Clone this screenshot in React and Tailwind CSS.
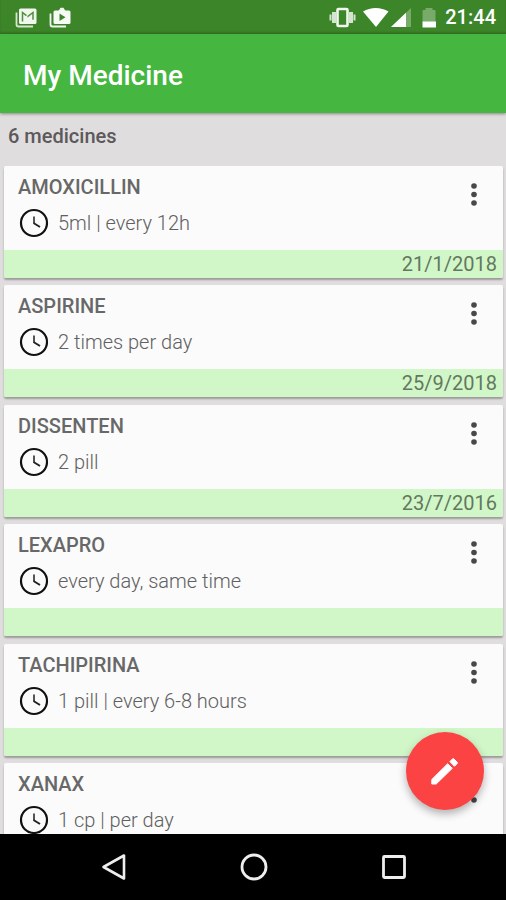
import React from "react";

const medicines = [
  { name: "AMOXICILLIN", dose: "5ml | every 12h", date: "21/1/2018" },
  { name: "ASPIRINE", dose: "2 times per day", date: "25/9/2018" },
  { name: "DISSENTEN", dose: "2 pill", date: "23/7/2016" },
  { name: "LEXAPRO", dose: "every day, same time", date: "" },
  { name: "TACHIPIRINA", dose: "1 pill | every 6-8 hours", date: "" },
  { name: "XANAX", dose: "1 cp | per day", date: "" },
];

function StatusBar() {
  return (
    <div className="flex h-[34px] shrink-0 items-center justify-between bg-[#3d8529] pl-[15px] pr-[10px] text-white shadow-[inset_0_-2px_2px_rgba(0,0,0,0.12)]">
      <div className="flex items-center gap-3">
        <svg className="h-[22px] w-[22px]" viewBox="0 0 22 22" aria-hidden="true">
          <path d="M1.500 6.500v12a2 2 0 0 0 2 2H18" fill="none" stroke="#d5e6d0" strokeWidth="1.800" />
          <rect x="4" y="2.500" width="17.500" height="15.500" rx="1.500" fill="#f1f7ef" />
          <path d="M7.500 15.500V6.500l5.200 4L18 6.500v9" fill="none" stroke="#4d8f3b" strokeWidth="1.500" strokeDasharray="14 1.500 14" />
        </svg>
        <svg className="h-[22px] w-[22px]" viewBox="0 0 22 22" aria-hidden="true">
          <path d="M1.500 7.500v11a2 2 0 0 0 2 2H17" fill="none" stroke="#f1f7ef" strokeWidth="1.800" />
          <path d="M9.500 5l2-3.200h3L16.500 5z" fill="#f1f7ef" />
          <rect x="4.500" y="4.500" width="17" height="13.500" rx="1.500" fill="#f7fbf6" />
          <path d="M10.500 7.500v7.500l6-3.700z" fill="#3d8529" />
        </svg>
      </div>
      <div className="flex items-center">
        <svg className="h-[22px] w-[112px]" viewBox="0 0 112 22" aria-hidden="true">
          <rect x="8.500" y="3" width="10" height="17" rx="1" fill="none" stroke="#f1f7ef" strokeWidth="2.600" />
          <path d="M5 6v11M22 6v11" stroke="#d3e5ce" strokeWidth="4" />
          <path d="M1.500 8.500v6M25.500 8.500v6" stroke="#d3e5ce" strokeWidth="2" />
          <path d="M34 5.500C41.500.8 52 .8 59.500 5.500L47 21z" fill="#fff" />
          <path d="M82 2v19H62z" fill="#78aa69" />
          <path d="M77 6.800V21H62z" fill="#fff" />
          <path d="M93.500 5a1 1 0 0 1 1-1h2V2h7v2h2a1 1 0 0 1 1 1v11h-13z" fill="#78aa69" />
          <path d="M93.500 15.500h13.500V21.500H93.500z" fill="#fff" />
        </svg>
        <span className="ml-1 text-[20px] leading-6 font-medium">21:44</span>
      </div>
    </div>
  );
}

function Clock() {
  return (
    <svg className="h-8 w-8 shrink-0" viewBox="0 0 32 32" fill="none" aria-hidden="true">
      <circle cx="16" cy="16" r="13" stroke="#111" strokeWidth="2.200" />
      <path d="M16 9.500v6.800" stroke="#555" strokeWidth="2" />
      <path d="M15.500 16l6.500 4" stroke="#222" strokeWidth="2" />
    </svg>
  );
}

function MedicineCard({ name, dose, date }) {
  return (
    <li className="overflow-hidden rounded-[2px] bg-[#fbfbfb] shadow-[0_2px_2px_rgba(0,0,0,0.3)] even:mb-px">
      <div className="flex h-[84px] justify-between pt-[9px] pr-[13px] pl-[14px]">
        <div>
          <h2 className="text-[20px] leading-6 font-medium text-[#686868]">{name}</h2>
          <div className="mt-2 flex items-center gap-2 text-[20px] leading-8 font-light text-[#606060]">
            <Clock />
            <p>{dose}</p>
          </div>
        </div>
        <button type="button" aria-label={`Options for ${name}`} className="flex h-10 w-8 items-center justify-center">
          <svg className="h-7 w-8" viewBox="0 0 32 28" fill="#484848" aria-hidden="true">
            <circle cx="16" cy="5" r="2.800" />
            <circle cx="16" cy="13.500" r="2.800" />
            <circle cx="16" cy="22" r="2.800" />
          </svg>
        </button>
      </div>
      <div className="h-7 bg-[#d1f7c8] pr-1.5 text-right text-[20px] leading-7 text-[#64785f]">{date}</div>
    </li>
  );
}

export default function App() {
  return (
    <div className="flex h-screen flex-col overflow-hidden bg-[#e0dddf] font-[Roboto,sans-serif]">
      <StatusBar />
      <header className="z-10 flex h-[79px] shrink-0 items-center bg-[#45b63f] px-[23px] pt-1 shadow-[0_1px_3px_rgba(0,0,0,0.4)]">
        <h1 className="text-[28px] leading-8 font-medium text-white">My Medicine</h1>
      </header>
      <main className="relative min-h-0 flex-1">
        <div className="h-full overflow-hidden pr-[3px] pl-1">
          <p className="px-1 pt-[11px] pb-[18px] text-[20px] leading-6 font-medium text-[#5c595b]">6 medicines</p>
          <ul className="flex flex-col gap-[7px]">
            {medicines.map((m) => (
              <MedicineCard key={m.name} {...m} />
            ))}
          </ul>
        </div>
        <button
          type="button"
          aria-label="Add medicine"
          className="absolute right-[22px] bottom-6 flex h-[78px] w-[78px] items-center justify-center rounded-full bg-[#fc4344] shadow-[0_4px_8px_rgba(0,0,0,0.3)]"
        >
          <svg className="h-9 w-9" viewBox="0 0 36 36" fill="#fff" stroke="#fff" strokeWidth="1" strokeLinejoin="round" aria-hidden="true">
            <path d="M4.800 26.500V31h4.400L25.300 15.300l-4.600-4.600z" />
            <path d="M22.900 8.500l2.600-2.600a1 1 0 0 1 1.400 0l3.300 3.300a1 1 0 0 1 0 1.400l-2.700 2.700z" />
          </svg>
        </button>
      </main>
      <nav className="flex h-[66px] shrink-0 items-center justify-center gap-[108px] bg-black pl-px">
        <button type="button" aria-label="Back">
          <svg className="block h-8 w-8" viewBox="0 0 32 32" fill="none" aria-hidden="true">
            <path d="M26 4.500v23L5.500 16z" stroke="#eee" strokeWidth="2.600" strokeLinejoin="round" />
          </svg>
        </button>
        <button type="button" aria-label="Home">
          <svg className="block h-8 w-8" viewBox="0 0 32 32" fill="none" aria-hidden="true">
            <circle cx="16" cy="16" r="12" stroke="#eee" strokeWidth="2.800" />
          </svg>
        </button>
        <button type="button" aria-label="Recent apps">
          <svg className="block h-8 w-8" viewBox="0 0 32 32" fill="none" aria-hidden="true">
            <rect x="5.500" y="5.500" width="21" height="21" rx="1" stroke="#eee" strokeWidth="2.800" />
          </svg>
        </button>
      </nav>
    </div>
  );
}
